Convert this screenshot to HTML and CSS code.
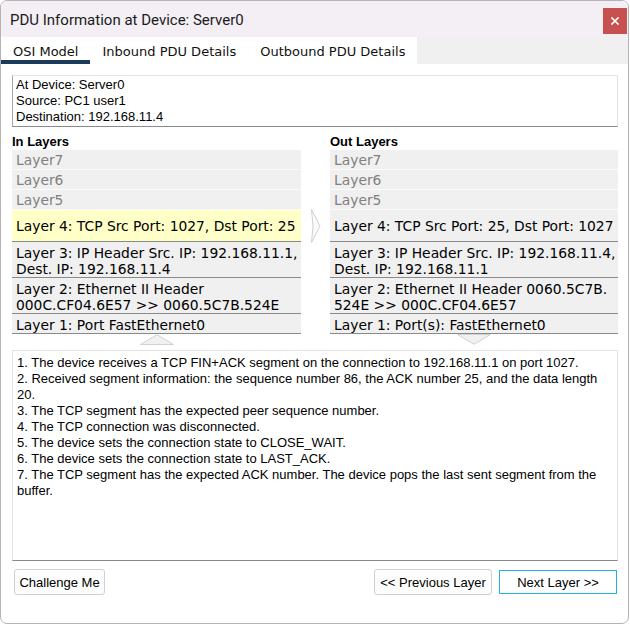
FILE: index.html
```html
<!DOCTYPE html>
<html>
<head>
<meta charset="utf-8">
<link rel="stylesheet" href="styles.css">
</head>
<body>
<div class="window">
  <div class="titlebar">
    <span class="title">PDU Information at Device: Server0</span>
    <button class="close" aria-label="Close">
      <svg width="8" height="8" viewBox="0 0 8 8"><path d="M1 1 L7 7 M7 1 L1 7" stroke="#fff" stroke-width="1.6" stroke-linecap="square"/></svg>
    </button>
  </div>
  <div class="tabs">
    <div class="tab active">OSI Model</div>
    <div class="tab">Inbound PDU Details</div>
    <div class="tab">Outbound PDU Details</div>
  </div>
  <div class="content">
    <div class="info">
      <div>At Device: Server0</div>
      <div>Source: PC1 user1</div>
      <div>Destination: 192.168.11.4</div>
    </div>
    <div class="layers">
      <div class="col left">
        <div class="col-title">In Layers</div>
        <div class="layer off">Layer7</div>
        <div class="layer off">Layer6</div>
        <div class="layer off">Layer5</div>
        <div class="layer l4 current">Layer 4: TCP Src Port: 1027, Dst Port: 25</div>
        <div class="layer on">Layer 3: IP Header Src. IP: 192.168.11.1,<br>Dest. IP: 192.168.11.4</div>
        <div class="layer on">Layer 2: Ethernet II Header<br>000C.CF04.6E57 &gt;&gt; 0060.5C7B.524E</div>
        <div class="layer on">Layer 1: Port FastEthernet0</div>
        <svg class="arrow" width="34" height="11" viewBox="0 0 34 11"><polygon points="0.5,10.5 17,0.7 33.5,10.5" fill="#f1f1f1" stroke="#d2d2d2"/></svg>
      </div>
      <div class="mid">
        <svg class="chevron" width="11" height="34" viewBox="0 0 11 34"><polygon points="1.5,0.5 10,17 1.5,33.5 3,17" fill="#fbfbfb" stroke="#d0d0d0"/></svg>
      </div>
      <div class="col right">
        <div class="col-title">Out Layers</div>
        <div class="layer off">Layer7</div>
        <div class="layer off">Layer6</div>
        <div class="layer off">Layer5</div>
        <div class="layer l4">Layer 4: TCP Src Port: 25, Dst Port: 1027</div>
        <div class="layer on">Layer 3: IP Header Src. IP: 192.168.11.4,<br>Dest. IP: 192.168.11.1</div>
        <div class="layer on">Layer 2: Ethernet II Header 0060.5C7B.<br>524E &gt;&gt; 000C.CF04.6E57</div>
        <div class="layer on">Layer 1: Port(s): FastEthernet0</div>
        <svg class="arrow" width="34" height="11" viewBox="0 0 34 11"><polygon points="0.5,0.5 17,10.3 33.5,0.5" fill="#f1f1f1" stroke="#d2d2d2"/></svg>
      </div>
    </div>
    <div class="desc">
      <div>1. The device receives a TCP FIN+ACK segment on the connection to 192.168.11.1 on port 1027.</div>
      <div>2. Received segment information: the sequence number 86, the ACK number 25, and the data length 20.</div>
      <div>3. The TCP segment has the expected peer sequence number.</div>
      <div>4. The TCP connection was disconnected.</div>
      <div>5. The device sets the connection state to CLOSE_WAIT.</div>
      <div>6. The device sets the connection state to LAST_ACK.</div>
      <div>7. The TCP segment has the expected ACK number. The device pops the last sent segment from the buffer.</div>
    </div>
    <div class="buttons">
      <button class="btn challenge">Challenge Me</button>
      <button class="btn prev">&lt;&lt; Previous Layer</button>
      <button class="btn next">Next Layer &gt;&gt;</button>
    </div>
  </div>
</div>
</body>
</html>
```
FILE: styles.css
```css
* { box-sizing: border-box; }
html, body { margin: 0; padding: 0; background: #ffffff; }

.window {
  width: 629px;
  height: 624px;
  border: 1px solid #b4b4b4;
  border-radius: 7px;
  overflow: hidden;
  background: #ffffff;
  display: flex;
  flex-direction: column;
}

.titlebar {
  height: 36px;
  flex: none;
  background: #f3eff5;
  display: flex;
  align-items: flex-start;
  padding-left: 9px;
}
.title {
  font-family: "Segoe UI", Roboto, "Noto Sans", sans-serif;
  font-size: 15px;
  color: #1b1b1b;
  line-height: 20px;
  margin-top: 9px;
}
.close {
  margin-left: auto;
  margin-top: 7px;
  margin-right: 1px;
  width: 24px;
  height: 26px;
  border: none;
  padding: 0;
  background: #c75050;
  display: flex;
  align-items: center;
  justify-content: center;
}
.close svg { display: block; }

.tabs {
  height: 27px;
  flex: none;
  display: flex;
  background: linear-gradient(90deg, #ffffff 0, #ffffff 416px, #f0f0f0 416px);
}
.tab {
  height: 27px;
  padding: 7px 12px 0;
  font-family: "DejaVu Sans", Verdana, sans-serif;
  font-size: 13px;
  line-height: 16px;
  color: #111;
  background: #ffffff;
  white-space: nowrap;
}
.tab.active {
  border-bottom: 4px solid #1b3a5c;
}

.content {
  flex: 1;
  padding: 0 10px 0 11px;
  display: flex;
  flex-direction: column;
}

.info {
  margin-top: 11px;
  border-top: 1px solid #e3e3e3;
  border-left: 1px solid #a6a6a6;
  border-right: 1px solid #e3e3e3;
  border-bottom: 1px solid #8a8a8a;
  padding: 1px 3px 1px;
  font-family: "Liberation Sans", Arial, sans-serif;
  font-size: 13px;
  line-height: 16px;
  color: #000;
}

.layers {
  display: flex;
  margin-top: 7px;
}
.col { display: flex; flex-direction: column; }
.col.left { width: 289px; }
.mid { width: 29px; padding-left: 9px; }
.col.right { width: 288px; }
.chevron { display: block; margin-top: 75px; }

.col-title {
  font-family: "Liberation Sans", Arial, sans-serif;
  font-weight: bold;
  font-size: 13px;
  line-height: 16px;
  color: #000;
}

.layer {
  background: #f0f0f0;
  font-family: "DejaVu Sans", Verdana, sans-serif;
  font-size: 13.85px;
  line-height: 16px;
  padding: 3px 4px 0;
  border-bottom: 1px solid #8a8a8a;
  color: #000;
  white-space: nowrap;
}
.layer.off {
  color: #808080;
  padding: 2px 4px 1px;
  border-bottom: 1px solid #fbfbfb;
}
.layer.l4 { padding: 8px 4px 7px; }
.layer.current { background: #ffffc8; }

.arrow { display: block; margin: 0 auto; }

.desc {
  margin-top: 5px;
  height: 211px;
  border-top: 1px solid #e3e3e3;
  border-left: 1px solid #e3e3e3;
  border-right: 1px solid #e3e3e3;
  border-bottom: 1px solid #8a8a8a;
  padding: 4px 4px 0 4px;
  font-family: "Liberation Sans", Arial, sans-serif;
  font-size: 13px;
  line-height: 16px;
  color: #000;
}

.buttons {
  display: flex;
  align-items: flex-start;
  gap: 7px;
  margin-top: 8px;
  padding-left: 2px;
  padding-right: 1px;
}
.btn {
  height: 26px;
  padding: 0;
  font-family: "Liberation Sans", Arial, sans-serif;
  font-size: 13px;
  color: #000;
  background: #fdfdfd;
  border: 1px solid #d0d0d0;
  border-radius: 3px;
}
.challenge { width: 91px; margin-right: auto; }
.prev { width: 118px; }
.next {
  width: 118px;
  height: 24px;
  margin-top: 1px;
  border: 1px solid #1cb4e4;
  border-radius: 0;
  background: #ffffff;
}
```
